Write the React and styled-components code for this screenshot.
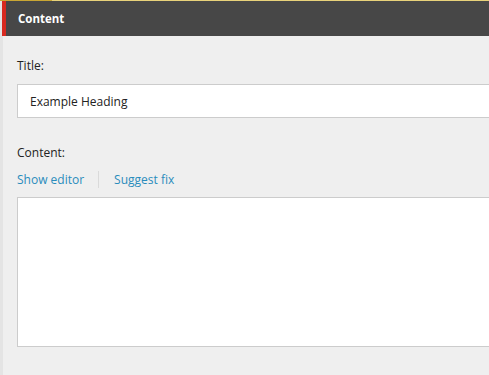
import React from 'react'
import styled, { createGlobalStyle } from 'styled-components'

const GlobalStyle = createGlobalStyle`
  html, body {
    margin: 0;
    padding: 0;
    background: #efefef;
    font-family: "Open Sans", "Noto Sans", sans-serif;
    overflow: hidden;
  }
`

const Page = styled.div`
  width: 489px;
  height: 375px;
  background: #efefef;
  border-left: 3px solid #e4e4e4;
  box-sizing: border-box;
  display: flex;
  flex-direction: column;
  border-top: 1px solid #e8d27a;
  position: relative;
`

const TopAccent = styled.div`
  position: absolute;
  top: -1px;
  left: -3px;
  width: 52px;
  height: 1px;
  background: #c9a634;
`

const Header = styled.div`
  height: 35px;
  background: #474747;
  border-left: 4px solid #d7291f;
  margin-left: -1px;
  display: flex;
  align-items: center;
  padding-left: 12px;
  color: #fff;
  font-size: 11.5px;
  font-weight: 700;
`

const Body = styled.div`
  display: flex;
  flex-direction: column;
  padding: 21px 0 0 14px;
`

const Label = styled.div`
  font-size: 12px;
  color: #222;
  line-height: 18px;
  margin-bottom: ${p => p.$gap || 10}px;
`

const Input = styled.div`
  height: 32px;
  background: #fff;
  border: 1px solid #ccc;
  border-right: none;
  display: flex;
  align-items: center;
  padding-left: 12px;
  font-size: 12px;
  color: #222;
  margin-bottom: 26px;
`

const Links = styled.div`
  display: flex;
  align-items: center;
  margin-bottom: 9px;
  height: 18px;
`

const LinkText = styled.span`
  color: #2a8cbc;
  font-size: 12px;
`

const Divider = styled.span`
  width: 1px;
  height: 17px;
  background: #dadada;
  margin: 0 15px 0 14px;
`

const TextArea = styled.div`
  height: 148px;
  background: #fff;
  border: 1px solid #ccc;
  border-right: none;
`

export default function App() {
  return (
    <>
      <GlobalStyle />
      <Page>
        <TopAccent />
        <Header>Content</Header>
        <Body>
          <Label $gap={9}>Title:</Label>
          <Input>Example Heading</Input>
          <Label $gap={8}>Content:</Label>
          <Links>
            <LinkText>Show editor</LinkText>
            <Divider />
            <LinkText>Suggest fix</LinkText>
          </Links>
          <TextArea />
        </Body>
      </Page>
    </>
  )
}
